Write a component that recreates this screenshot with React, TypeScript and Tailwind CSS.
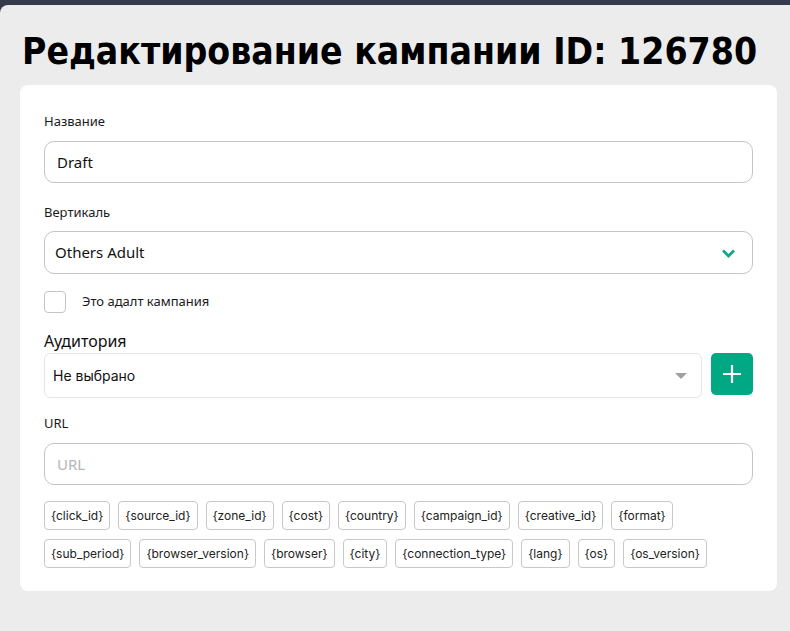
import React from "react";

const tagsRow = [
    "{click_id}", "{source_id}", "{zone_id}", "{cost}", "{country}", "{campaign_id}", "{creative_id}", "{format}",
    "{sub_period}", "{browser_version}", "{browser}", "{city}", "{connection_type}", "{lang}", "{os}", "{os_version}",
];

const Label = ({children}: {children: React.ReactNode}) => (
    <div className="text-[13px] leading-[16px] text-[#1a1a1a] font-['Noto_Sans',sans-serif]">{children}</div>
);

export default function App() {
    return (
        <div className="min-h-[631px] bg-[#353a4c]">
            <div className="h-[5px]" />
            <div className="bg-[#ececec] rounded-tl-[8px] min-h-[626px] pl-[20px] pr-[13px] pt-[24px] pb-[40px]">
                <h1 className="ml-[2px] whitespace-nowrap text-[37px] leading-[46px] font-bold text-black [font-stretch:condensed] font-['DejaVu_Sans_Condensed','DejaVu_Sans',sans-serif]">
                    Редактирование кампании ID: 126780
                </h1>
                <div className="mt-[10px] bg-white rounded-[8px] px-[24px] pt-[28px] pb-[23px]">
                    <Label>Название</Label>
                    <input
                        defaultValue="Draft"
                        className="mt-[12px] w-full h-[42px] border border-[#c4c4c4] rounded-[10px] px-[12px] text-[15px] text-[#111] font-['Noto_Sans',sans-serif] outline-none"
                    />

                    <div className="mt-[21px]"><Label>Вертикаль</Label></div>
                    <div className="mt-[11px] w-full h-[43px] border border-[#c4c4c4] rounded-[10px] px-[10px] flex items-center justify-between">
                        <span className="text-[15px] text-[#111] font-['Noto_Sans',sans-serif]">Others Adult</span>
                        <svg width="15" height="10" viewBox="0 0 15 10" className="mr-[6px]">
                            <path d="M2 2.5 L7.5 8 L13 2.5" fill="none" stroke="#12a889" strokeWidth="2.8" />
                        </svg>
                    </div>

                    <div className="mt-[17px] flex items-center">
                        <div className="w-[22px] h-[22px] border border-[#c4c4c4] rounded-[4px]" />
                        <span className="ml-[16px] text-[13px] text-[#1a1a1a] font-['Noto_Sans',sans-serif]">Это адалт кампания</span>
                    </div>

                    <div className="mt-[18px] text-[16px] leading-[20px] text-[#111] font-['Noto_Sans',sans-serif]">Аудитория</div>
                    <div className="mt-[2px] flex gap-[9px]">
                        <div className="flex-1 h-[45px] border border-[#e5e5e5] rounded-[6px] pl-[8px] pr-[14px] flex items-center justify-between">
                            <span className="text-[14px] text-[#111] font-['Inter',sans-serif]">Не выбрано</span>
                            <svg width="12" height="6" viewBox="0 0 12 6">
                                <path d="M0 0 L12 0 L6 6 Z" fill="#a0a0a0" />
                            </svg>
                        </div>
                        <button className="w-[42px] h-[42px] bg-[#00a884] rounded-[5px] flex items-center justify-center">
                            <svg width="22" height="22" viewBox="0 0 22 22">
                                <path d="M11 2 V20 M2 11 H20" stroke="white" strokeWidth="2.2" />
                            </svg>
                        </button>
                    </div>

                    <div className="mt-[17px]"><Label>URL</Label></div>
                    <input
                        placeholder="URL"
                        className="mt-[12px] w-full h-[42px] border border-[#c4c4c4] rounded-[10px] px-[12px] text-[15px] text-[#111] placeholder:text-[#b5b5b5] font-['Noto_Sans',sans-serif] outline-none"
                    />

                    <div className="mt-[16px] flex flex-wrap gap-x-[8px] gap-y-[9px]">
                        {tagsRow.map((t) => (
                            <span
                                key={t}
                                className="h-[29px] px-[6px] border border-[#c8c8c8] rounded-[4px] flex items-center text-[12px] text-[#222] font-['Inter',sans-serif]"
                            >
                                {t}
                            </span>
                        ))}
                    </div>
                </div>
            </div>
        </div>
    );
}
